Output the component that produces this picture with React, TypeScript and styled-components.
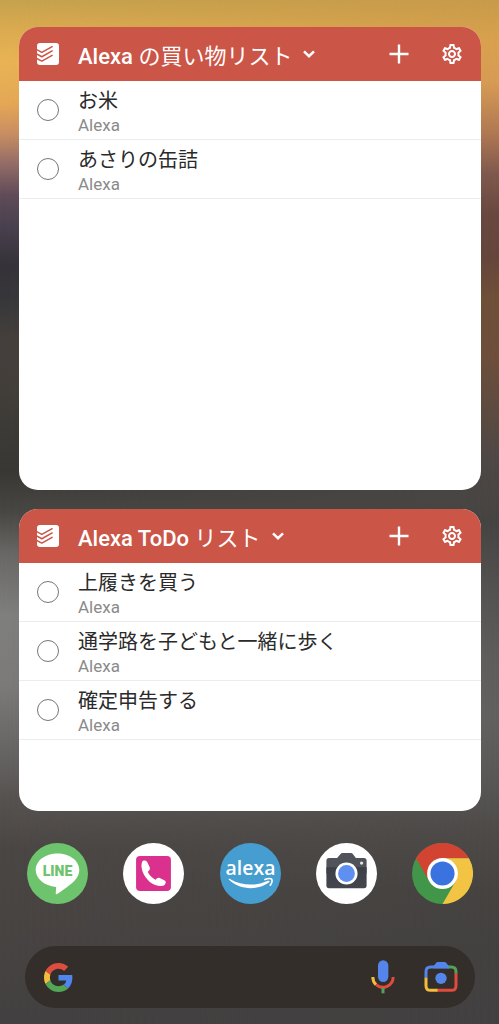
import React from "react";
import styled, { createGlobalStyle } from "styled-components";
import { MdOutlineSettings } from "react-icons/md";

const GlobalStyle = createGlobalStyle`
  * { box-sizing: border-box; }
  body {
    margin: 0;
    font-family: Roboto, "Noto Sans CJK JP", sans-serif;
    background: #434041;
  }
  button { border: 0; padding: 0; background: none; color: inherit; font: inherit; cursor: pointer; }
`;

const Screen = styled.main`
  position: relative;
  isolation: isolate;
  display: flex;
  flex-direction: column;
  min-height: 100vh;
  padding: 27px 18px 16px 19px;
  background: linear-gradient(
    #c89b4a 0%, #d9a14e 4%, #d79b55 8%, #b07852 13%, #7f594d 17%, #69483f 21%,
    #66463c 25%, #705038 29%, #6e4f3b 35%, #5e4c40 40%, #4e4846 45%, #464442 51%,
    #525150 57%, #5f5d5b 64%, #636160 70%, #5a5857 76%, #4e4b49 81%, #464341 87%,
    #434140 93%, #434041 100%
  );

  &::before {
    content: "";
    position: absolute;
    inset: 0;
    z-index: -1;
    background: linear-gradient(
      #c5a24e 0%, #dbab50 3%, #e8b355 6%, #e5a855 10%, #c98f62 13%, #936c68 16%,
      #604c58 19%, #49414f 22%, #343238 26%, #35363a 29%, #443f3c 33%, #413e3a 38%,
      #383733 46%, #484743 50%, #686765 54%, #7f7f7e 60%, #7b7a79 67%, #686665 73%,
      #565250 78%, #4a4644 83%, #484442 90%, #434041 100%
    );
    mask-image: linear-gradient(to right, #000, transparent);
  }
`;

const Card = styled.section<{ $minHeight: number }>`
  min-height: ${(p) => p.$minHeight}px;
  border-radius: 19px;
  overflow: hidden;
  background: #fff;

  & + & { margin-top: 19px; }
`;

const CardHeader = styled.header`
  display: flex;
  align-items: center;
  height: 54px;
  padding: 0 17px 0 18px;
  background: #cb5547;
  color: #fff;
`;

const Heading = styled.h2`
  flex: 1;
  margin: 0 0 0 19px;
  font-size: 22px;
  font-weight: 500;
  line-height: 24px;
`;

const ListPicker = styled.button`
  display: flex;
  align-items: center;
  gap: 11px;
  white-space: nowrap;
`;

const ListName = styled.span`
  padding-top: 5px;
`;

const Kana = styled.span`
  font-weight: 400;
`;

const Actions = styled.div`
  display: flex;
  gap: 29px;
`;

const IconButton = styled.button`
  display: grid;
  place-items: center;
  flex: none;
  min-width: 24px;
  min-height: 24px;

  svg { display: block; }
`;

const TaskList = styled.ul`
  margin: 0;
  padding: 0;
  list-style: none;
`;

const Task = styled.li`
  height: 59px;
  border-bottom: 1px solid #ececec;
`;

const TaskLabel = styled.label`
  display: flex;
  align-items: center;
  gap: 19px;
  height: 100%;
  padding: 0 18px;
`;

const Tick = styled.input`
  appearance: none;
  flex: none;
  width: 22px;
  height: 22px;
  margin: 0;
  border: 1px solid #767676;
  border-radius: 50%;

  &:checked { background: #cb5547; }
`;

const TaskText = styled.span`
  display: flex;
  flex-direction: column;
  padding-top: 5px;
`;

const TaskName = styled.span`
  font-size: 20px;
  line-height: 26px;
  color: #2a2a2a;
`;

const TaskProject = styled.span`
  font-size: 17px;
  line-height: 23px;
  color: #8a8a8a;
`;

const Dock = styled.nav`
  display: flex;
  justify-content: space-between;
  margin-top: 32px;
  padding: 0 8px;
`;

const AppLink = styled.a`
  display: block;
  width: 61px;
  height: 61px;

  svg { display: block; width: 100%; height: 100%; }
`;

const SearchBar = styled.form`
  display: flex;
  align-items: center;
  height: 62px;
  margin: 42px 6px 0;
  padding: 0 17px 0 19px;
  border-radius: 31px;
  background: #342e2a;
`;

const SearchInput = styled.input`
  flex: 1;
  min-width: 0;
  height: 40px;
  margin: 0 16px;
  border: 0;
  outline: 0;
  background: transparent;
  color: #fff;
  font: inherit;
  font-size: 20px;
`;

const SearchTools = styled.div`
  display: flex;
  align-items: center;
  gap: 29px;
`;

const TodoistLogo = () => (
  <svg width="22" height="22" viewBox="0 0 22 22" aria-hidden="true">
    <rect width="22" height="22" rx="3" fill="#fff" />
    <g fill="none" stroke="#cb5547" strokeWidth="1.5">
      <path d="M-1 6.2 4.3 9.1Q4.8 9.4 5.3 9.1L15.6 3.3" />
      <path d="M-1 10.6 4.3 13.5Q4.8 13.8 5.3 13.5L15.6 7.7" />
      <path d="M-1 15 4.3 17.9Q4.8 18.2 5.3 17.9L15.6 12.1" />
    </g>
  </svg>
);

const Chevron = () => (
  <svg width="12" height="8" viewBox="0 0 12 8" fill="none" stroke="#fff" strokeWidth="2.5" aria-hidden="true">
    <path d="M1 1.400 6 6.200l5-4.800" />
  </svg>
);

const Plus = () => (
  <svg width="20" height="20" viewBox="0 0 20 20" fill="none" stroke="#fff" strokeWidth="2.4" aria-hidden="true">
    <path d="M10 .5v19M.5 10h19" />
  </svg>
);

const LineIcon = () => (
  <svg viewBox="81 39 182 182" aria-hidden="true">
    <circle cx="172" cy="130" r="91" fill="#6dc46d" />
    <path
      fill="#fff"
      d="M172 70C208 70 237 91 237 119C237 139 224 154 200 171C190 178 180 186 171 191C167 193 166 190 167 186L168 170C132 167 107 146 107 119C107 91 136 70 172 70Z"
    />
    <text x="172" y="138" textAnchor="middle" fontFamily="Roboto, sans-serif" fontWeight="900" fontSize="42" fill="#6dc46d">
      LINE
    </text>
  </svg>
);

const PhoneIcon = () => (
  <svg viewBox="370 39 182 182" aria-hidden="true">
    <circle cx="461" cy="130" r="91" fill="#fff" />
    <rect x="409" y="78" width="104" height="104" rx="12" fill="#d9318d" />
    <path
      fill="#fff"
      d="M427 95C421 112 430 138 450 155C465 167 485 170 494 164C499 159 499 152 493 150L481 144C475 141 470 144 468 149C460 146 446 133 444 125C449 122 452 116 449 110L443 97C439 90 430 90 427 95Z"
    />
  </svg>
);

const AlexaIcon = () => (
  <svg viewBox="59 39 182 182" aria-hidden="true">
    <circle cx="150" cy="130" r="91" fill="#469dcf" />
    <text x="150" y="135" textAnchor="middle" fontFamily='"Open Sans", sans-serif' fontWeight="600" fontSize="58" fill="#fff">
      alexa
    </text>
    <path fill="#fff" d="M85 148C84 145 87 145 90 147C124 167 168 168 202 152C207 150 209 154 205 157C172 181 117 180 85 148Z" />
    <path fill="none" stroke="#fff" strokeWidth="5" strokeLinecap="round" strokeLinejoin="round" d="M193 148C201 145 209 144 213 147C216 151 213 159 209 165" />
  </svg>
);

const CameraIcon = () => (
  <svg viewBox="348 39 182 182" aria-hidden="true">
    <defs>
      <linearGradient id="camera-body" x1="0" y1="0" x2="0" y2="1">
        <stop offset="0" stopColor="#3c3f45" />
        <stop offset="1" stopColor="#43464c" />
      </linearGradient>
    </defs>
    <circle cx="439" cy="130" r="91" fill="#fff" />
    <path fill="#505359" d="M387 84H411L420 73Q423 69 428 69H451Q456 69 459 73L467 84H491Q499 84 499 92V130H379V92Q379 84 387 84Z" />
    <path fill="url(#camera-body)" d="M379 111H499V166Q499 174 491 174H387Q379 174 379 166Z" />
    <circle cx="439" cy="130" r="33" fill="#fff" />
    <circle cx="439" cy="130" r="25" fill="#5f8ff0" />
    <circle cx="484" cy="99" r="5" fill="#e4e5e7" />
  </svg>
);

const ChromeIcon = () => (
  <svg viewBox="637 39 182 182" aria-hidden="true">
    <circle cx="728" cy="130" r="91" fill="#42964a" />
    <path fill="#d24332" d="M649 84.500A91 91 0 0 1 807 84.500L728 84.500L688.600 152.750Z" />
    <path fill="#f3c443" d="M807 84.500A91 91 0 0 1 728 221L767.400 152.750L728 84.500Z" />
    <circle cx="728" cy="130" r="46" fill="#fff" />
    <circle cx="728" cy="130" r="36" fill="#3a73e0" />
  </svg>
);

const GoogleLogo = () => (
  <svg width="29" height="29" viewBox="0 0 48 48" aria-hidden="true">
    <path fill="#de4e40" d="M24 9.5c3.54 0 6.71 1.22 9.21 3.6l6.85-6.85C35.9 2.38 30.47 0 24 0 14.62 0 6.51 5.38 2.56 13.22l7.98 6.19C12.43 13.72 17.74 9.5 24 9.5z" />
    <path fill="#5086ec" d="M46.98 24.55c0-1.57-.15-3.09-.38-4.55H24v9.02h12.94c-.58 2.96-2.26 5.48-4.78 7.18l7.73 6c4.51-4.18 7.09-10.36 7.09-17.65z" />
    <path fill="#f2bd3d" d="M10.53 28.59c-.48-1.45-.76-2.99-.76-4.59s.27-3.14.76-4.59l-7.98-6.19C.92 16.46 0 20.12 0 24c0 3.88.92 7.54 2.56 10.78l7.97-6.19z" />
    <path fill="#52a656" d="M24 48c6.48 0 11.93-2.13 15.89-5.81l-7.73-6c-2.15 1.45-4.92 2.3-8.16 2.3-6.26 0-11.57-4.22-13.47-9.91l-7.98 6.19C6.51 42.62 14.62 48 24 48z" />
  </svg>
);

const MicIcon = () => (
  <svg width="24" height="34" viewBox="92 92 72 102" fill="none" strokeWidth="9" aria-hidden="true">
    <rect x="113" y="93" width="31" height="65" rx="15.500" fill="#5485ea" />
    <path stroke="#f2bd3d" d="M97.500 143A31 31 0 0 0 107 166" />
    <path stroke="#df4b3d" d="M107 166A31 31 0 0 0 158.500 143" />
    <path stroke="#4fa257" d="M128 176V192" />
  </svg>
);

const LensIcon = () => (
  <svg width="34" height="32" viewBox="253 94 102 96" fill="none" strokeWidth="9" aria-hidden="true">
    <path stroke="#4fa257" d="M324 112H335Q349 112 349 126V132" />
    <path stroke="#df4b3d" d="M349 131V168Q349 182 335 182H293" />
    <path stroke="#f2bd3d" d="M294 182H273Q259 182 259 168V143" />
    <path stroke="#5485ea" d="M259 144V126Q259 112 273 112H327" />
    <path fill="#5485ea" d="M282 109L289 100Q291 97 295 97H314Q318 97 320 100L327 109V116H282Z" />
    <circle cx="304" cy="146" r="17" fill="#5485ea" />
  </svg>
);

type WidgetProps = {
  title: React.ReactNode;
  tasks: string[];
  minHeight: number;
};

const ListWidget = ({ title, tasks, minHeight }: WidgetProps) => (
  <Card $minHeight={minHeight}>
    <CardHeader>
      <TodoistLogo />
      <Heading>
        <ListPicker type="button">
          <ListName>{title}</ListName>
          <Chevron />
        </ListPicker>
      </Heading>
      <Actions>
        <IconButton type="button" aria-label="タスクを追加">
          <Plus />
        </IconButton>
        <IconButton type="button" aria-label="設定">
          <MdOutlineSettings size={24} />
        </IconButton>
      </Actions>
    </CardHeader>
    <TaskList>
      {tasks.map((name) => (
        <Task key={name}>
          <TaskLabel>
            <Tick type="checkbox" />
            <TaskText>
              <TaskName>{name}</TaskName>
              <TaskProject>Alexa</TaskProject>
            </TaskText>
          </TaskLabel>
        </Task>
      ))}
    </TaskList>
  </Card>
);

const apps = [
  { name: "LINE", Icon: LineIcon },
  { name: "電話", Icon: PhoneIcon },
  { name: "Alexa", Icon: AlexaIcon },
  { name: "カメラ", Icon: CameraIcon },
  { name: "Chrome", Icon: ChromeIcon },
];

export default function App() {
  return (
    <>
      <GlobalStyle />
      <Screen lang="ja">
        <ListWidget
          title={<>Alexa <Kana>の買い物リスト</Kana></>}
          tasks={["お米", "あさりの缶詰"]}
          minHeight={463}
        />
        <ListWidget
          title={<>Alexa ToDo <Kana>リスト</Kana></>}
          tasks={["上履きを買う", "通学路を子どもと一緒に歩く", "確定申告する"]}
          minHeight={302}
        />
        <Dock aria-label="アプリ">
          {apps.map(({ name, Icon }) => (
            <AppLink key={name} href="#" aria-label={name}>
              <Icon />
            </AppLink>
          ))}
        </Dock>
        <SearchBar role="search">
          <GoogleLogo />
          <SearchInput type="text" aria-label="検索" />
          <SearchTools>
            <IconButton type="button" aria-label="音声検索">
              <MicIcon />
            </IconButton>
            <IconButton type="button" aria-label="画像検索">
              <LensIcon />
            </IconButton>
          </SearchTools>
        </SearchBar>
      </Screen>
    </>
  );
}
